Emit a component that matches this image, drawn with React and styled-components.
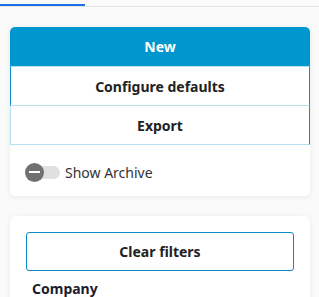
import React, { useState } from "react";
import styled, { createGlobalStyle } from "styled-components";

const GlobalStyle = createGlobalStyle`
  body {
    margin: 0;
    background: #fafafa;
    font-family: "Noto Sans", "Open Sans", sans-serif;
    color: #222;
  }
`;

function App() {
  const [archived, setArchived] = useState(false);
  return (
    <>
      <GlobalStyle />
      <Page>
        <Tabs>
          <ActiveTab />
        </Tabs>
        <Content>
          <Card>
            <PrimaryButton>New</PrimaryButton>
            <OutlineButton $left $right>Configure defaults</OutlineButton>
            <OutlineButton $right>Export</OutlineButton>
            <ToggleRow onClick={() => setArchived(!archived)}>
              <Track>
                <Knob $on={archived} />
              </Track>
              <span>Show Archive</span>
            </ToggleRow>
          </Card>
          <FilterCard>
            <ClearButton>Clear filters</ClearButton>
            <FilterTitle>Company</FilterTitle>
          </FilterCard>
        </Content>
      </Page>
    </>
  );
}

export default App;

const Page = styled.div`
  height: 297px;
  overflow: hidden;
`;

const Tabs = styled.div`
  padding-top: 4px;
  border-bottom: 1px solid #e6e6e6;
`;

const ActiveTab = styled.div`
  width: 85px;
  height: 2px;
  background: #1a6fe6;
`;

const Content = styled.div`
  padding: 20px 9px 0 10px;
  display: flex;
  flex-direction: column;
  gap: 20px;
`;

const Card = styled.div`
  background: #fff;
  border-radius: 5px;
  box-shadow: 0 1px 6px rgba(0, 0, 0, 0.07);
  display: flex;
  flex-direction: column;
  padding-bottom: 14px;
`;

const PrimaryButton = styled.button`
  height: 39px;
  border: none;
  border-radius: 5px 5px 0 0;
  background: #0097cf;
  color: #fff;
  font: 700 14px "Noto Sans", sans-serif;
`;

const OutlineButton = styled.button`
  height: 40px;
  background: #fff;
  color: #222;
  font: 700 14px "Noto Sans", sans-serif;
  border: 1px solid #b9def0;
  border-left-color: ${(p) => (p.$left ? "#0a93c9" : "#b9def0")};
  border-right-color: ${(p) => (p.$right ? "#0a93c9" : "#b9def0")};
  & + & {
    border-top: none;
    height: 39px;
  }
`;

const ToggleRow = styled.label`
  display: flex;
  align-items: center;
  gap: 5px;
  margin: 18px 0 0 15px;
  font-size: 14px;
  color: #333;
  cursor: pointer;
`;

const Track = styled.div`
  position: relative;
  width: 31px;
  height: 13px;
  border-radius: 7px;
  background: #e0e0e0;
  margin: 3px 0 3px 4px;
`;

const Knob = styled.div`
  position: absolute;
  top: -3px;
  left: ${(p) => (p.$on ? "14px" : "-4px")};
  width: 19px;
  height: 19px;
  border-radius: 50%;
  background: #707070;
  &::after {
    content: "";
    position: absolute;
    left: 4px;
    right: 4px;
    top: 8px;
    height: 2px;
    background: #fff;
  }
`;

const FilterCard = styled.div`
  background: #fff;
  border-radius: 6px 6px 0 0;
  box-shadow: 0 1px 6px rgba(0, 0, 0, 0.07);
  padding: 16px 16px 20px;
`;

const ClearButton = styled.button`
  width: 100%;
  height: 39px;
  background: #fff;
  border: 1px solid #0a8bc2;
  border-radius: 3px;
  color: #222;
  font: 700 14px "Noto Sans", sans-serif;
`;

const FilterTitle = styled.div`
  margin: 8px 0 0 6px;
  font-size: 14px;
  line-height: 19px;
  font-weight: 700;
  color: #1c1c2c;
`;
